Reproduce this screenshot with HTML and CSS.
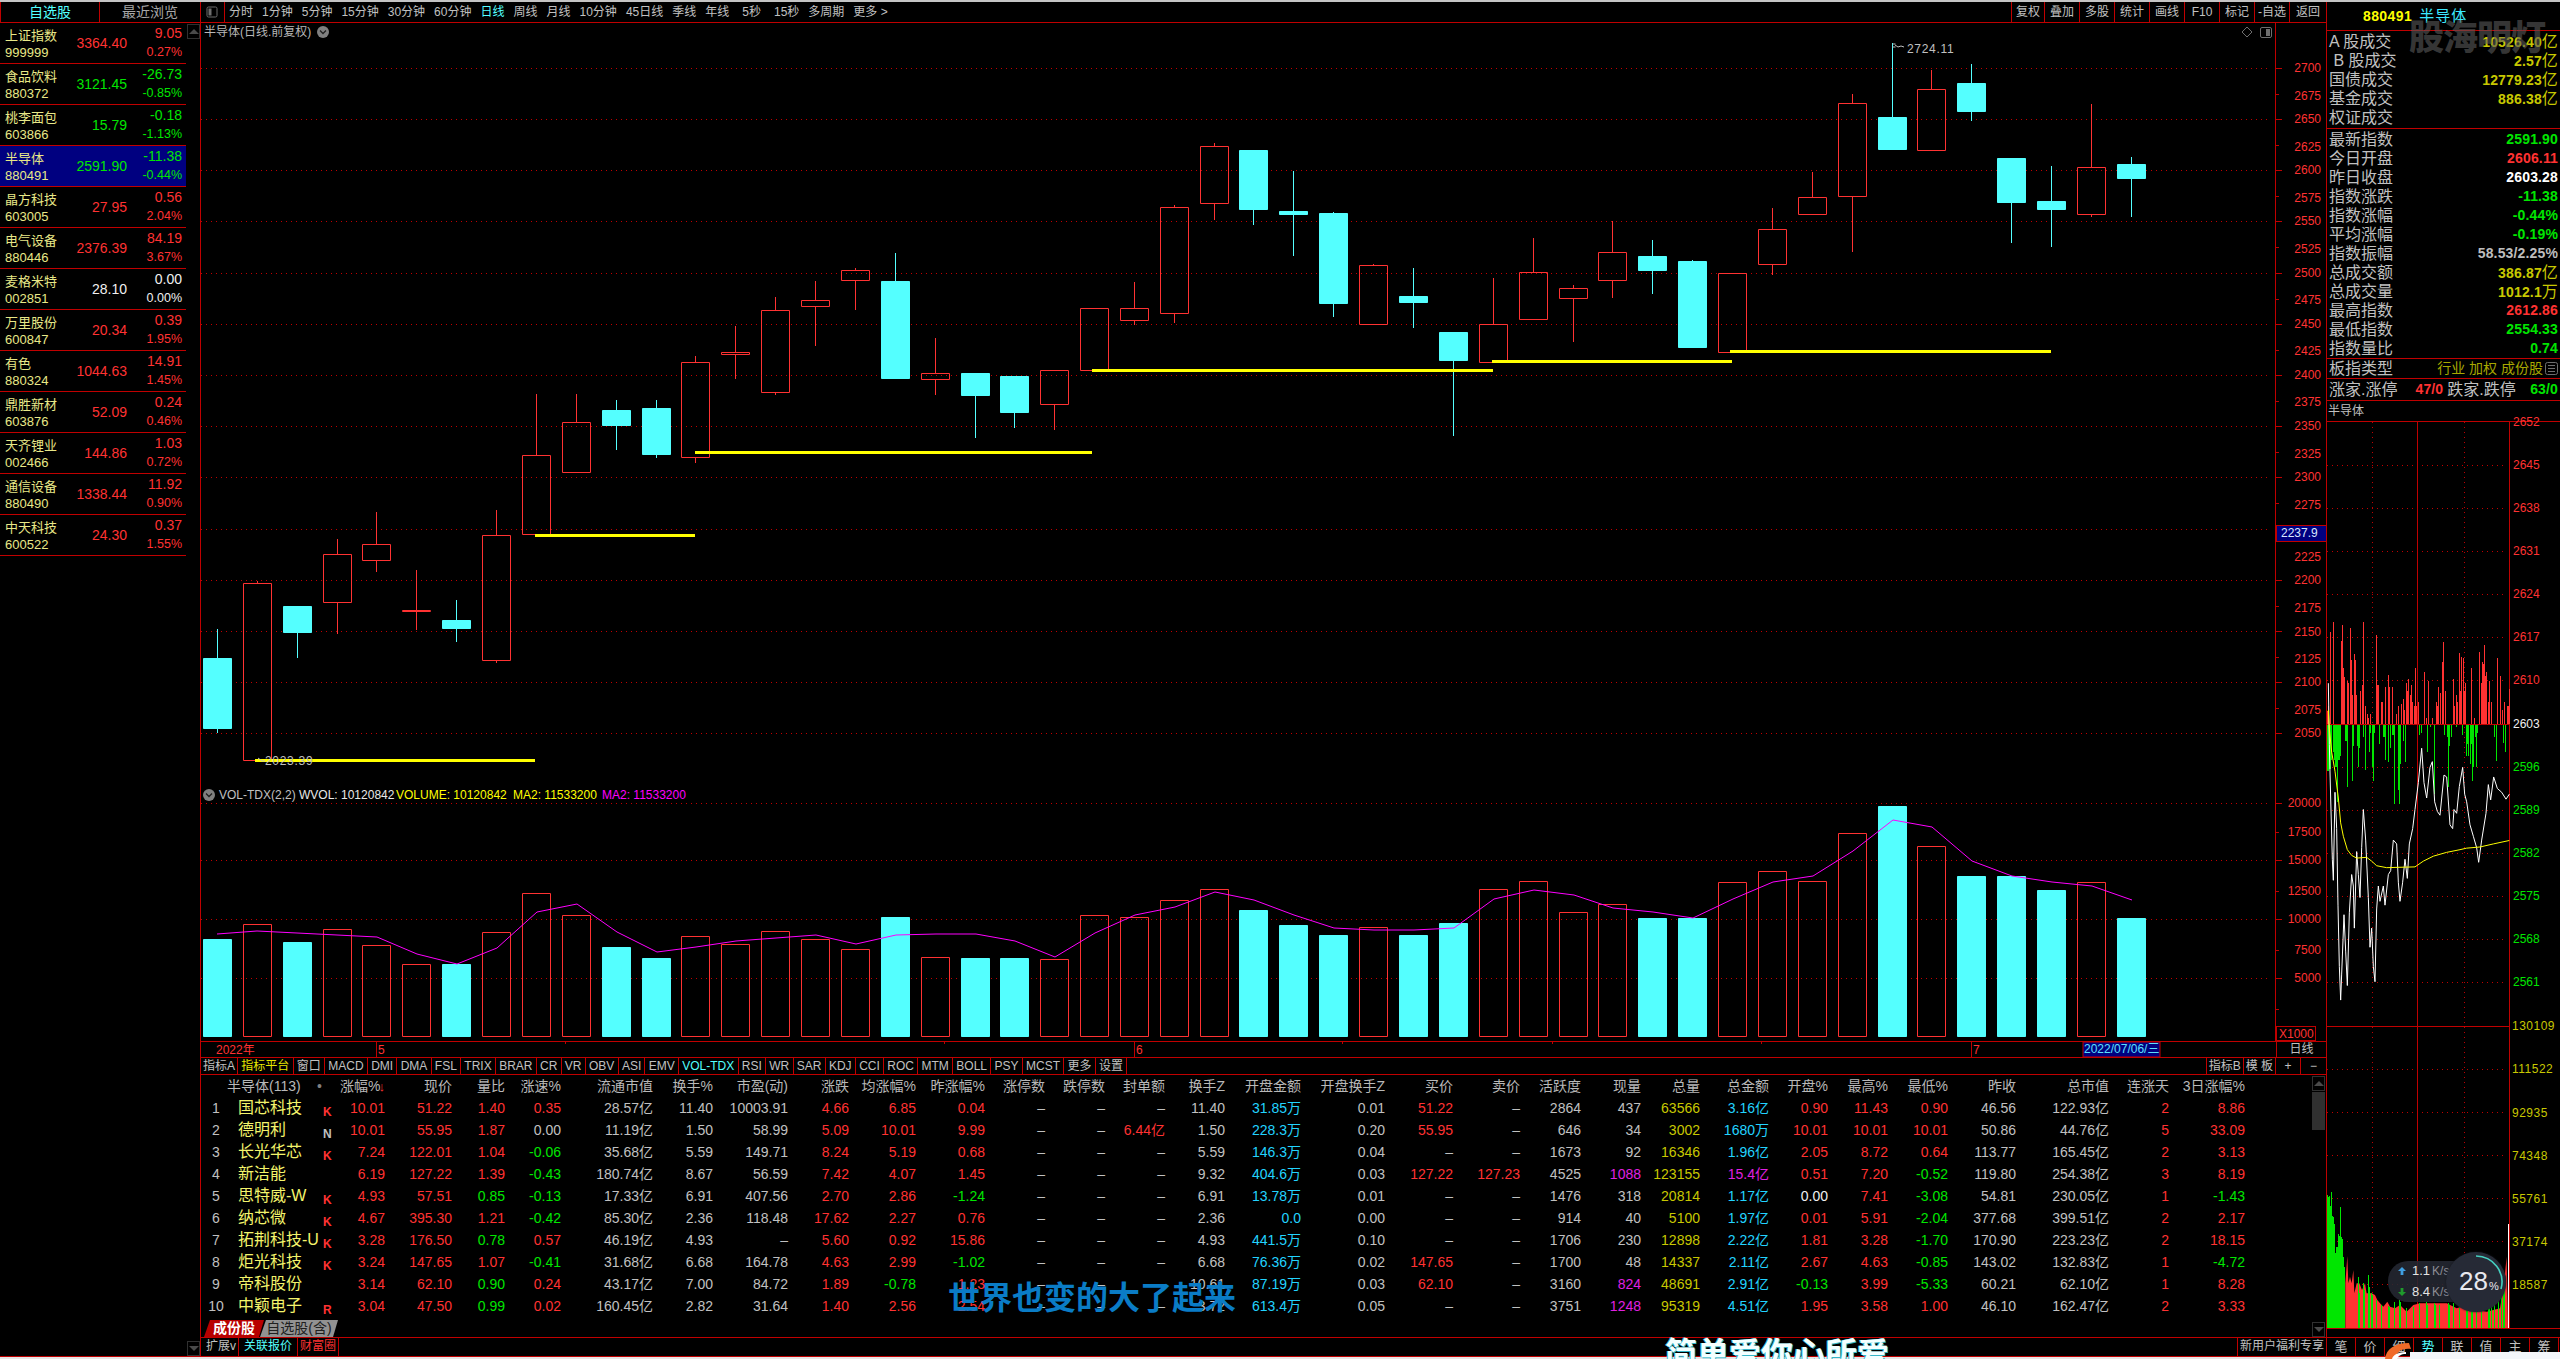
FILE: index.html
```html
<!DOCTYPE html>
<html lang="zh-CN">
<head>
<meta charset="utf-8">
<title>半导体 880491</title>
<link rel="stylesheet" href="styles.css">
</head>
<body>
<div class="topline"></div>
<div class="app">

<aside class="side">
  <div class="side-tabs"><div class="side-tab active">自选股</div><div class="side-tab">最近浏览</div></div>
  <div class="side-body">
    <div class="quotes">
      <div class="quote"><div class="qname"><span>上证指数</span><span>999999</span></div><div class="qprice r">3364.40</div><div class="qchg r"><span>9.05</span><span class="pct">0.27%</span></div></div>
      <div class="quote"><div class="qname"><span>食品饮料</span><span>880372</span></div><div class="qprice g">3121.45</div><div class="qchg g"><span>-26.73</span><span class="pct">-0.85%</span></div></div>
      <div class="quote"><div class="qname"><span>桃李面包</span><span>603866</span></div><div class="qprice g">15.79</div><div class="qchg g"><span>-0.18</span><span class="pct">-1.13%</span></div></div>
      <div class="quote sel"><div class="qname"><span>半导体</span><span>880491</span></div><div class="qprice g">2591.90</div><div class="qchg g"><span>-11.38</span><span class="pct">-0.44%</span></div></div>
      <div class="quote"><div class="qname"><span>晶方科技</span><span>603005</span></div><div class="qprice r">27.95</div><div class="qchg r"><span>0.56</span><span class="pct">2.04%</span></div></div>
      <div class="quote"><div class="qname"><span>电气设备</span><span>880446</span></div><div class="qprice r">2376.39</div><div class="qchg r"><span>84.19</span><span class="pct">3.67%</span></div></div>
      <div class="quote"><div class="qname"><span>麦格米特</span><span>002851</span></div><div class="qprice w">28.10</div><div class="qchg w"><span>0.00</span><span class="pct">0.00%</span></div></div>
      <div class="quote"><div class="qname"><span>万里股份</span><span>600847</span></div><div class="qprice r">20.34</div><div class="qchg r"><span>0.39</span><span class="pct">1.95%</span></div></div>
      <div class="quote"><div class="qname"><span>有色</span><span>880324</span></div><div class="qprice r">1044.63</div><div class="qchg r"><span>14.91</span><span class="pct">1.45%</span></div></div>
      <div class="quote"><div class="qname"><span>鼎胜新材</span><span>603876</span></div><div class="qprice r">52.09</div><div class="qchg r"><span>0.24</span><span class="pct">0.46%</span></div></div>
      <div class="quote"><div class="qname"><span>天齐锂业</span><span>002466</span></div><div class="qprice r">144.86</div><div class="qchg r"><span>1.03</span><span class="pct">0.72%</span></div></div>
      <div class="quote"><div class="qname"><span>通信设备</span><span>880490</span></div><div class="qprice r">1338.44</div><div class="qchg r"><span>11.92</span><span class="pct">0.90%</span></div></div>
      <div class="quote"><div class="qname"><span>中天科技</span><span>600522</span></div><div class="qprice r">24.30</div><div class="qchg r"><span>0.37</span><span class="pct">1.55%</span></div></div>
    </div>
    <div class="side-scroll"><div class="sbtn up"></div><div class="sbtn down"></div></div>
  </div>
</aside>

<main class="center">
  <nav class="toolbar">
    <div class="tool-icon"><svg width="12" height="12" viewBox="0 0 12 12"><rect x="1" y="1" width="10" height="10" rx="1.5" class="ic-line"/><rect x="2.5" y="2.5" width="3" height="7" class="ic-fill"/></svg></div>
    <div class="periods">
      <span>分时</span><span>1分钟</span><span>5分钟</span><span>15分钟</span><span>30分钟</span><span>60分钟</span><span class="on">日线</span><span>周线</span><span>月线</span><span>10分钟</span><span>45日线</span><span>季线</span><span>年线</span><span class="wide">5秒</span><span class="wide">15秒</span><span>多周期</span><span>更多 &gt;</span>
    </div>
    <div class="actions"><span class="first">复权</span><span>叠加</span><span>多股</span><span>统计</span><span>画线</span><span>F10</span><span>标记</span><span>-自选</span><span class="last">返回</span></div>
  </nav>

  <svg class="price-chart" viewBox="201 23 2125 764" width="2125" height="764">
    <path class="grid" d="M201 68.5H2270M201 119.5H2270M201 170.5H2270M201 221.5H2270M201 273.5H2270M201 324.5H2270M201 375.5H2270M201 426.5H2270M201 477.5H2270M201 529.5H2270M201 580.5H2270M201 631.5H2270M201 682.5H2270M201 733.5H2270"/>
    <path class="solid" d="M2275.5 23V787M2276 68.5h6M2276 119.5h6M2276 170.5h6M2276 221.5h6M2276 273.5h6M2276 324.5h6M2276 375.5h6M2276 426.5h6M2276 477.5h6M2276 529.5h6M2276 580.5h6M2276 631.5h6M2276 682.5h6M2276 733.5h6M2276 94.5h3M2276 145.5h3M2276 196.5h3M2276 247.5h3M2276 299.5h3M2276 350.5h3M2276 401.5h3M2276 452.5h3M2276 503.5h3M2276 606.5h3M2276 657.5h3M2276 708.5h3"/>
    <path class="candle-up" d="M243.5 583.5h28V760.5h-28zM257.5 581V583
      M323.5 554.5h28V602.5h-28zM337.5 539V554M337.5 603V634
      M362.5 544.5h28V560.5h-28zM376.5 512V544M376.5 561V572
      M402.5 610.5h28V611.5h-28zM416.5 570V610M416.5 612V630
      M482.5 535.5h28V660.5h-28zM496.5 510V535M496.5 661V663
      M522.5 455.5h28V534.5h-28zM536.5 394V455
      M562.5 422.5h28V472.5h-28zM576.5 394V422
      M681.5 362.5h28V457.5h-28zM695.5 356V362M695.5 458V463
      M721.5 352.5h28V354.5h-28zM735.5 326V352M735.5 355V379
      M761.5 310.5h28V392.5h-28zM775.5 297V310M775.5 393V395
      M801.5 300.5h28V306.5h-28zM815.5 281V300M815.5 307V346
      M841.5 270.5h28V280.5h-28zM855.5 268V270M855.5 281V310
      M921.5 373.5h28V379.5h-28zM935.5 338V373M935.5 380V395
      M1040.5 370.5h28V404.5h-28zM1054.5 405V430
      M1080.5 308.5h28V370.5h-28z
      M1120.5 308.5h28V320.5h-28zM1134.5 282V308M1134.5 321V325
      M1160.5 207.5h28V313.5h-28zM1174.5 205V207M1174.5 314V323
      M1200.5 146.5h28V203.5h-28zM1214.5 143V146M1214.5 204V220
      M1359.5 265.5h28V324.5h-28zM1373.5 264V265
      M1479.5 324.5h28V362.5h-28zM1493.5 278V324
      M1519.5 272.5h28V319.5h-28zM1533.5 238V272
      M1559.5 288.5h28V298.5h-28zM1573.5 285V288M1573.5 299V342
      M1598.5 252.5h28V280.5h-28zM1612.5 221V252M1612.5 281V298
      M1718.5 273.5h28V352.5h-28z
      M1758.5 229.5h28V264.5h-28zM1772.5 208V229M1772.5 265V275
      M1798.5 197.5h28V214.5h-28zM1812.5 172V197
      M1838.5 103.5h28V196.5h-28zM1852.5 94V103M1852.5 197V252
      M1917.5 89.5h28V150.5h-28zM1931.5 70V89
      M2077.5 167.5h28V214.5h-28zM2091.5 104V167M2091.5 215V217"/>
    <path class="candle-down" d="M203.5 658.5h28V728.5h-28zM217.5 629V658M217.5 729V733
      M283.5 606.5h28V632.5h-28zM297.5 633V658
      M442.5 620.5h28V628.5h-28zM456.5 600V620M456.5 629V642
      M602.5 410.5h28V425.5h-28zM616.5 400V410M616.5 426V450
      M642.5 408.5h28V454.5h-28zM656.5 400V408M656.5 455V458
      M881.5 281.5h28V378.5h-28zM895.5 253V281
      M961.5 373.5h28V395.5h-28zM975.5 396V438
      M1000.5 376.5h28V412.5h-28zM1014.5 413V428
      M1239.5 150.5h28V209.5h-28zM1253.5 210V225
      M1279.5 211.5h28V214.5h-28zM1293.5 171V211M1293.5 215V256
      M1319.5 213.5h28V303.5h-28zM1333.5 212V213M1333.5 304V317
      M1399.5 296.5h28V302.5h-28zM1413.5 268V296M1413.5 303V328
      M1439.5 332.5h28V360.5h-28zM1453.5 361V436
      M1638.5 256.5h28V270.5h-28zM1652.5 240V256M1652.5 271V294
      M1678.5 261.5h28V347.5h-28zM1692.5 260V261
      M1878.5 117.5h28V149.5h-28zM1892.5 43V117
      M1957.5 83.5h28V111.5h-28zM1971.5 64V83M1971.5 112V121
      M1997.5 158.5h28V202.5h-28zM2011.5 203V243
      M2037.5 201.5h28V209.5h-28zM2051.5 166V201M2051.5 210V247
      M2117.5 164.5h28V178.5h-28zM2131.5 157V164M2131.5 179V217"/>
    <path class="support" d="M255 760.5H535M535 535.5H695M695 452.5H1092M1092 370.5H1493M1492 361.5H1732M1730 351.5H2051"/>
    <path class="marker" d="M1892.5 44h3M1892.5 47h3M1895 45l3 2 3-1 3 1M258 758l4 3 3 0"/>
    <text class="note" x="1907" y="49">2724.11</text>
    <text class="note" x="265" y="761">2023.39</text>
    <text class="title" x="204" y="32">半导体(日线.前复权)</text>
    <circle class="dot-btn" cx="323" cy="32" r="6"/>
    <path class="dot-chev" d="M320 30.5l3 3 3-3"/>
    <path class="ic-line" d="M2247 27l5 5-5 5-5-5z"/>
    <rect class="ic-line" x="2260.5" y="27.5" width="11" height="10" rx="1.5"/>
    <rect class="ic-fill" x="2266" y="29" width="4" height="7"/>
    <g class="axis-labels">
      <text x="2321" y="68">2700</text><text x="2321" y="96">2675</text><text x="2321" y="119">2650</text><text x="2321" y="147">2625</text><text x="2321" y="170">2600</text><text x="2321" y="198">2575</text><text x="2321" y="221">2550</text><text x="2321" y="249">2525</text><text x="2321" y="273">2500</text><text x="2321" y="300">2475</text><text x="2321" y="324">2450</text><text x="2321" y="351">2425</text><text x="2321" y="375">2400</text><text x="2321" y="402">2375</text><text x="2321" y="426">2350</text><text x="2321" y="454">2325</text><text x="2321" y="477">2300</text><text x="2321" y="505">2275</text><text x="2321" y="557">2225</text><text x="2321" y="580">2200</text><text x="2321" y="608">2175</text><text x="2321" y="632">2150</text><text x="2321" y="659">2125</text><text x="2321" y="682">2100</text><text x="2321" y="710">2075</text><text x="2321" y="733">2050</text>
    </g>
    <rect class="last-box" x="2276.5" y="525.5" width="50" height="16"/>
    <text class="last-text" x="2281" y="533">2237.9</text>
  </svg>

  <svg class="vol-chart" viewBox="201 788 2125 254" width="2125" height="254">
    <path class="grid" d="M201 804.5H2270M201 861.5H2270M201 920.5H2270M201 979.5H2270"/>
    <path class="solid" d="M2275.5 788V1042M2276 804.5h6M2276 861.5h6M2276 920.5h6M2276 979.5h6M2276 833.5h3M2276 892.5h3M2276 951.5h3M2276 1010.5h3"/>
    <path class="candle-up" d="M243.5 925.5h28V1037.5h-28zM323.5 930.5h28V1037.5h-28zM362.5 946.5h28V1037.5h-28zM402.5 965.5h28V1037.5h-28zM482.5 933.5h28V1037.5h-28zM522.5 894.5h28V1037.5h-28zM562.5 916.5h28V1037.5h-28zM681.5 937.5h28V1037.5h-28zM721.5 945.5h28V1037.5h-28zM761.5 932.5h28V1037.5h-28zM801.5 940.5h28V1037.5h-28zM841.5 950.5h28V1037.5h-28zM921.5 958.5h28V1037.5h-28zM1040.5 960.5h28V1037.5h-28zM1080.5 916.5h28V1037.5h-28zM1120.5 918.5h28V1037.5h-28zM1160.5 901.5h28V1037.5h-28zM1200.5 890.5h28V1037.5h-28zM1359.5 928.5h28V1037.5h-28zM1479.5 890.5h28V1037.5h-28zM1519.5 882.5h28V1037.5h-28zM1559.5 913.5h28V1037.5h-28zM1598.5 905.5h28V1037.5h-28zM1718.5 883.5h28V1037.5h-28zM1758.5 872.5h28V1037.5h-28zM1798.5 882.5h28V1037.5h-28zM1838.5 834.5h28V1037.5h-28zM1917.5 847.5h28V1037.5h-28zM2077.5 883.5h28V1037.5h-28z"/>
    <path class="candle-down" d="M203.5 940.5h28V1037.5h-28zM283.5 943.5h28V1037.5h-28zM442.5 965.5h28V1037.5h-28zM602.5 948.5h28V1037.5h-28zM642.5 959.5h28V1037.5h-28zM881.5 918.5h28V1037.5h-28zM961.5 959.5h28V1037.5h-28zM1000.5 959.5h28V1037.5h-28zM1239.5 911.5h28V1037.5h-28zM1279.5 926.5h28V1037.5h-28zM1319.5 936.5h28V1037.5h-28zM1399.5 936.5h28V1037.5h-28zM1439.5 924.5h28V1037.5h-28zM1638.5 919.5h28V1037.5h-28zM1678.5 919.5h28V1037.5h-28zM1878.5 807.5h28V1037.5h-28zM1957.5 877.5h28V1037.5h-28zM1997.5 877.5h28V1037.5h-28zM2037.5 891.5h28V1037.5h-28zM2117.5 919.5h28V1037.5h-28z"/>
    <polyline class="ma" points="217,935 257,932 297,934 337,936 377,938 417,955 457,965 497,949 537,913 577,905 617,933 657,953 696,948 736,942 776,939 816,936 856,945 896,936 936,935 976,935 1015,942 1055,958 1095,934 1135,916 1175,908 1215,893 1254,901 1294,916 1334,929 1374,931 1414,931 1454,929 1494,900 1534,891 1574,896 1613,909 1653,913 1693,919 1733,900 1773,883 1813,877 1853,852 1893,821 1932,828 1972,862 2012,877 2052,883 2092,887 2132,901"/>
    <circle class="dot-btn" cx="209" cy="796" r="6"/>
    <path class="dot-chev" d="M206 794.5l3 3 3-3"/>
    <text class="ind gray" x="219" y="796">VOL-TDX(2,2)</text>
    <text class="ind white" x="299" y="796">WVOL: 10120842</text>
    <text class="ind yellow" x="396" y="796">VOLUME: 10120842</text>
    <text class="ind yellow" x="513" y="796">MA2: 11533200</text>
    <text class="ind magenta" x="602" y="796">MA2: 11533200</text>
    <g class="axis-labels">
      <text x="2321" y="804">20000</text><text x="2321" y="833">17500</text><text x="2321" y="861">15000</text><text x="2321" y="892">12500</text><text x="2321" y="920">10000</text><text x="2321" y="951">7500</text><text x="2321" y="979">5000</text>
    </g>
    <rect class="x-box" x="2276.5" y="1027.5" width="39" height="14"/>
    <text class="x-text" x="2279" y="1035">X1000</text>
  </svg>

  <div class="datebar">
    <svg class="dates" viewBox="201 1043 2075 15" width="2075" height="15">
      <path class="solid" d="M376.5 1043V1058M1134.5 1043V1058M1971.5 1043V1058M565.5 1043v2M944.5 1043v2M1342.5 1043v2M1552.5 1043v2M1761.5 1043v2"/>
      <text class="date-r" x="216" y="1051">2022年</text>
      <text class="date-r" x="378" y="1051">5</text>
      <text class="date-r" x="1136" y="1051">6</text>
      <text class="date-r" x="1973" y="1051">7</text>
      <rect class="cursor-box" x="2083" y="1043" width="77" height="15"/>
      <text class="cursor-date" x="2084" y="1050">2022/07/06/三</text>
    </svg>
    <div class="date-cell">日线</div>
  </div>

  <div class="indtabs">
    <span class="tight">指标A</span><span class="yel">指标平台</span><span>窗口</span><span>MACD</span><span>DMI</span><span>DMA</span><span>FSL</span><span>TRIX</span><span>BRAR</span><span>CR</span><span>VR</span><span>OBV</span><span>ASI</span><span>EMV</span><span class="on">VOL-TDX</span><span>RSI</span><span>WR</span><span>SAR</span><span>KDJ</span><span>CCI</span><span>ROC</span><span>MTM</span><span>BOLL</span><span>PSY</span><span>MCST</span><span>更多</span><span>设置</span>
    <div class="indright"><span class="tight">指标B</span><span class="tight">模 板</span><span class="pm">+</span><span class="pm">−</span></div>
  </div>

  <section class="table-wrap">
    <div class="tbl">
      <div class="row head"><span></span><span class="hname">半导体(113)</span><span class="hdot">•</span><span>涨幅%<b class="arrow">↓</b></span><span>现价</span><span>量比</span><span>涨速%</span><span>流通市值</span><span>换手%</span><span>市盈(动)</span><span>涨跌</span><span>均涨幅%</span><span>昨涨幅%</span><span>涨停数</span><span>跌停数</span><span>封单额</span><span>换手Z</span><span>开盘金额</span><span>开盘换手Z</span><span>买价</span><span>卖价</span><span>活跃度</span><span>现量</span><span>总量</span><span>总金额</span><span>开盘%</span><span>最高%</span><span>最低%</span><span>昨收</span><span>总市值</span><span>连涨天</span><span>3日涨幅%</span></div>

      <div class="row"><span class="no">1</span><span class="nm">国芯科技</span><span class="tag r">K</span><span class="r">10.01</span><span class="r">51.22</span><span class="r">1.40</span><span class="r">0.35</span><span>28.57亿</span><span>11.40</span><span>10003.91</span><span class="r">4.66</span><span class="r">6.85</span><span class="r">0.04</span><span>–</span><span>–</span><span>–</span><span>11.40</span><span class="c">31.85万</span><span>0.01</span><span class="r">51.22</span><span>–</span><span>2864</span><span>437</span><span class="y">63566</span><span class="c">3.16亿</span><span class="r">0.90</span><span class="r">11.43</span><span class="r">0.90</span><span>46.56</span><span>122.93亿</span><span class="r">2</span><span class="r">8.86</span></div>
      <div class="row"><span class="no">2</span><span class="nm">德明利</span><span class="tag">N</span><span class="r">10.01</span><span class="r">55.95</span><span class="r">1.87</span><span>0.00</span><span>11.19亿</span><span>1.50</span><span>58.99</span><span class="r">5.09</span><span class="r">10.01</span><span class="r">9.99</span><span>–</span><span>–</span><span class="r">6.44亿</span><span>1.50</span><span class="c">228.3万</span><span>0.20</span><span class="r">55.95</span><span>–</span><span>646</span><span>34</span><span class="y">3002</span><span class="c">1680万</span><span class="r">10.01</span><span class="r">10.01</span><span class="r">10.01</span><span>50.86</span><span>44.76亿</span><span class="r">5</span><span class="r">33.09</span></div>
      <div class="row"><span class="no">3</span><span class="nm">长光华芯</span><span class="tag r">K</span><span class="r">7.24</span><span class="r">122.01</span><span class="r">1.04</span><span class="g">-0.06</span><span>35.68亿</span><span>5.59</span><span>149.71</span><span class="r">8.24</span><span class="r">5.19</span><span class="r">0.68</span><span>–</span><span>–</span><span>–</span><span>5.59</span><span class="c">146.3万</span><span>0.04</span><span>–</span><span>–</span><span>1673</span><span>92</span><span class="y">16346</span><span class="c">1.96亿</span><span class="r">2.05</span><span class="r">8.72</span><span class="r">0.64</span><span>113.77</span><span>165.45亿</span><span class="r">2</span><span class="r">3.13</span></div>
      <div class="row"><span class="no">4</span><span class="nm">新洁能</span><span class="tag"></span><span class="r">6.19</span><span class="r">127.22</span><span class="r">1.39</span><span class="g">-0.43</span><span>180.74亿</span><span>8.67</span><span>56.59</span><span class="r">7.42</span><span class="r">4.07</span><span class="r">1.45</span><span>–</span><span>–</span><span>–</span><span>9.32</span><span class="c">404.6万</span><span>0.03</span><span class="r">127.22</span><span class="r">127.23</span><span>4525</span><span class="m">1088</span><span class="y">123155</span><span class="m">15.4亿</span><span class="r">0.51</span><span class="r">7.20</span><span class="g">-0.52</span><span>119.80</span><span>254.38亿</span><span class="r">3</span><span class="r">8.19</span></div>
      <div class="row"><span class="no">5</span><span class="nm">思特威-W</span><span class="tag r">K</span><span class="r">4.93</span><span class="r">57.51</span><span class="g">0.85</span><span class="g">-0.13</span><span>17.33亿</span><span>6.91</span><span>407.56</span><span class="r">2.70</span><span class="r">2.86</span><span class="g">-1.24</span><span>–</span><span>–</span><span>–</span><span>6.91</span><span class="c">13.78万</span><span>0.01</span><span>–</span><span>–</span><span>1476</span><span>318</span><span class="y">20814</span><span class="c">1.17亿</span><span class="w">0.00</span><span class="r">7.41</span><span class="g">-3.08</span><span>54.81</span><span>230.05亿</span><span class="r">1</span><span class="g">-1.43</span></div>
      <div class="row"><span class="no">6</span><span class="nm">纳芯微</span><span class="tag r">K</span><span class="r">4.67</span><span class="r">395.30</span><span class="r">1.21</span><span class="g">-0.42</span><span>85.30亿</span><span>2.36</span><span>118.48</span><span class="r">17.62</span><span class="r">2.27</span><span class="r">0.76</span><span>–</span><span>–</span><span>–</span><span>2.36</span><span class="c">0.0</span><span>0.00</span><span>–</span><span>–</span><span>914</span><span>40</span><span class="y">5100</span><span class="c">1.97亿</span><span class="r">0.01</span><span class="r">5.91</span><span class="g">-2.04</span><span>377.68</span><span>399.51亿</span><span class="r">2</span><span class="r">2.17</span></div>
      <div class="row"><span class="no">7</span><span class="nm">拓荆科技-U</span><span class="tag r">K</span><span class="r">3.28</span><span class="r">176.50</span><span class="g">0.78</span><span class="r">0.57</span><span>46.19亿</span><span>4.93</span><span>–</span><span class="r">5.60</span><span class="r">0.92</span><span class="r">15.86</span><span>–</span><span>–</span><span>–</span><span>4.93</span><span class="c">441.5万</span><span>0.10</span><span>–</span><span>–</span><span>1706</span><span>230</span><span class="y">12898</span><span class="c">2.22亿</span><span class="r">1.81</span><span class="r">3.28</span><span class="g">-1.70</span><span>170.90</span><span>223.23亿</span><span class="r">2</span><span class="r">18.15</span></div>
      <div class="row"><span class="no">8</span><span class="nm">炬光科技</span><span class="tag r">K</span><span class="r">3.24</span><span class="r">147.65</span><span class="r">1.07</span><span class="g">-0.41</span><span>31.68亿</span><span>6.68</span><span>164.78</span><span class="r">4.63</span><span class="r">2.99</span><span class="g">-1.02</span><span>–</span><span>–</span><span>–</span><span>6.68</span><span class="c">76.36万</span><span>0.02</span><span class="r">147.65</span><span>–</span><span>1700</span><span>48</span><span class="y">14337</span><span class="c">2.11亿</span><span class="r">2.67</span><span class="r">4.63</span><span class="g">-0.85</span><span>143.02</span><span>132.83亿</span><span class="r">1</span><span class="g">-4.72</span></div>
      <div class="row"><span class="no">9</span><span class="nm">帝科股份</span><span class="tag"></span><span class="r">3.14</span><span class="r">62.10</span><span class="g">0.90</span><span class="r">0.24</span><span>43.17亿</span><span>7.00</span><span>84.72</span><span class="r">1.89</span><span class="g">-0.78</span><span class="r">1.23</span><span>–</span><span>–</span><span>–</span><span>10.61</span><span class="c">87.19万</span><span>0.03</span><span class="r">62.10</span><span>–</span><span>3160</span><span class="m">824</span><span class="y">48691</span><span class="c">2.91亿</span><span class="g">-0.13</span><span class="r">3.99</span><span class="g">-5.33</span><span>60.21</span><span>62.10亿</span><span class="r">1</span><span class="r">8.28</span></div>
      <div class="row"><span class="no">10</span><span class="nm">中颖电子</span><span class="tag r">R</span><span class="r">3.04</span><span class="r">47.50</span><span class="g">0.99</span><span class="r">0.02</span><span>160.45亿</span><span>2.82</span><span>31.64</span><span class="r">1.40</span><span class="r">2.56</span><span class="r">2.54</span><span>–</span><span>–</span><span>–</span><span>3.72</span><span class="c">613.4万</span><span>0.05</span><span>–</span><span>–</span><span>3751</span><span class="m">1248</span><span class="y">95319</span><span class="c">4.51亿</span><span class="r">1.95</span><span class="r">3.58</span><span class="r">1.00</span><span>46.10</span><span>162.47亿</span><span class="r">2</span><span class="r">3.33</span></div>

      <div class="subtabs"><span class="st on">成份股</span><span class="st">自选股(含)</span></div>
    </div>
    <div class="vscroll"><div class="sbtn up"></div><div class="thumb"></div><div class="sbtn down"></div></div>
  </section>

  <footer class="bottombar">
    <span>扩展v</span><span class="cy">关联报价</span><span class="rd">财富圈</span>
    <span class="promo">新用户福利专享</span>
  </footer>
</main>

<aside class="panel">
  <div class="p-head"><span class="p-code">880491</span><span class="p-name">半导体</span></div>
  <div class="p-block top">
    <div class="prow"><span>A 股成交</span><b class="y">10526.40<i>亿</i></b></div>
    <div class="prow"><span>&nbsp;B 股成交</span><b class="y">2.57<i>亿</i></b></div>
    <div class="prow"><span>国债成交</span><b class="y">12779.23<i>亿</i></b></div>
    <div class="prow"><span>基金成交</span><b class="y">886.38<i>亿</i></b></div>
    <div class="prow"><span>权证成交</span></div>
  </div>
  <div class="p-block mid">
    <div class="prow"><span>最新指数</span><b class="g">2591.90</b></div>
    <div class="prow"><span>今日开盘</span><b class="r">2606.11</b></div>
    <div class="prow"><span>昨日收盘</span><b class="w">2603.28</b></div>
    <div class="prow"><span>指数涨跌</span><b class="g">-11.38</b></div>
    <div class="prow"><span>指数涨幅</span><b class="g">-0.44%</b></div>
    <div class="prow"><span>平均涨幅</span><b class="g">-0.19%</b></div>
    <div class="prow"><span>指数振幅</span><b>58.53/2.25%</b></div>
    <div class="prow"><span>总成交额</span><b class="y">386.87<i>亿</i></b></div>
    <div class="prow"><span>总成交量</span><b class="y">1012.1<i>万</i></b></div>
    <div class="prow"><span>最高指数</span><b class="r">2612.86</b></div>
    <div class="prow"><span>最低指数</span><b class="g">2554.33</b></div>
    <div class="prow"><span>指数量比</span><b class="g">0.74</b></div>
  </div>
  <div class="p-block type">
    <div class="prow"><span>板指类型</span><em class="olive">行业 加权 成份股<svg width="13" height="13" viewBox="0 0 13 13"><rect x=".5" y=".5" width="12" height="12" rx="2" class="ic-line"/><path class="ic-line" d="M3 3.5h7M3 6.5h7M3 9.5h7"/></svg></em></div>
  </div>
  <div class="p-block breadth">
    <div class="prow"><span>涨家.涨停</span><b class="r b1">47/0</b><span class="s2">跌家.跌停</span><b class="g b3">63/0</b></div>
  </div>
  <div class="p-label">半导体</div>

  <svg class="intraday" viewBox="2327 422 233 906" width="233" height="906">
    <path class="grid" d="M2327 465.5H2505M2327 508.5H2505M2327 551.5H2505M2327 594.5H2505M2327 637.5H2505M2327 680.5H2505M2327 767.5H2505M2327 810.5H2505M2327 853.5H2505M2327 896.5H2505M2327 939.5H2505M2327 982.5H2505M2327 1069.5H2505M2327 1112.5H2505M2327 1155.5H2505M2327 1198.5H2505M2327 1241.5H2505M2327 1284.5H2505M2372.5 422V1328M2464.5 422V1328"/>
    <path class="solid" d="M2417.5 422V1328M2509.5 422V1328M2327 724.5H2509M2327 1026.5H2509"/>

    <g transform="translate(2300 400) scale(.33333 .38270)">
      <path class="bar-r" d="M82 846V812M85 846V800M93 846V605M101 846V580M125 846V630M127 846V588M131 846V700M134 846V725M142 846V735M145 846V745M147 846V740M151 846V595M153 846V740M155 846V680M158 846V770M163 846V665M167 846V680M170 846V770M183 846V760M187 846V745M190 846V580M196 846V800M202 846V820M206 846V830M213 846V820M229 846V615M232 846V745M235 846V745M245 846V790M249 846V790M256 846V750M265 846V718M270 846V750M279 846V750M291 846V820M295 846V800M305 846V795M311 846V780M315 846V810M320 846V740M324 846V760M327 846V730M331 846V770M334 846V745M338 846V790M343 846V800M347 846V700M351 846V800M355 846V790M373 846V712M379 846V830M386 846V735M398 846V830M409 846V790M413 846V800M416 846V750M423 846V765M427 846V685M431 846V632M437 846V760M461 846V730M465 846V800M469 846V770M473 846V790M478 846V660M482 846V760M486 846V672M490 846V675M494 846V760M498 846V740M515 846V700M524 846V830M538 846V658M544 846V740M547 846V685M550 846V690M553 846V710M555 846V640M558 846V720M561 846V710M566 846V790M569 846V735M575 846V790M594 846V675M601 846V720M607 846V810M613 846V790M623 846V800M626 846V800M629 846V755"/>
      <path class="bar-g" d="M83 848V970M86 848V970M89 848V965M92 848V965M96 848V940M100 848V920M104 848V940M108 848V960M110 848V960M112 848V1050M116 848V940M119 848V940M121 848V930M136 848V890M139 848V890M142 848V1012M158 848V995M160 848V905M172 848V905M176 848V960M180 848V910M192 848V880M198 848V968M210 848V920M213 848V870M219 848V960M222 848V995M225 848V870M236 848V850M240 848V900M250 848V880M254 848V880M258 848V940M266 848V945M272 848V910M278 848V875M281 848V875M284 848V1055M295 848V1020M297 848V1020M299 848V1055M302 848V950M310 848V890M316 848V945M322 848V850M360 848V875M366 848V870M382 848V920M392 848V855M405 848V1030M433 848V875M442 848V880M445 848V900M447 848V1010M450 848V905M454 848V880M469 848V855M488 848V875M500 848V930M503 848V900M506 848V930M511 848V950M515 848V900M518 848V995M522 848V960M526 848V880M530 848V960M534 848V870M584 848V880M591 848V942M610 848V895M618 848V920"/>
      <polyline class="line-w" points="85,740 88,900 92,1040 97,1200 100,1255 105,1025 110,1120 114,1320 118,1480 122,1568 125,1500 132,1345 137,1440 142,1530 148,1340 155,1240 160,1270 163,1380 170,1180 175,1240 180,1300 185,1170 190,1070 197,1150 205,1300 210,1430 215,1380 220,1480 225,1520 230,1330 235,1270 240,1310 250,1270 255,1320 265,1240 272,1230 280,1150 290,1160 295,1260 300,1310 308,1260 315,1200 322,1250 328,1160 338,1120 345,1070 355,1000 365,910 372,1000 380,1040 390,960 397,945 404,1050 412,1075 420,1085 432,980 440,985 450,1110 458,1120 462,1070 470,1080 478,1010 488,960 494,1030 500,1050 510,1110 520,1140 530,1170 536,1208 545,1150 558,1080 565,1005 572,1045 581,985 592,1015 605,1025 618,1043 628,1030"/>
      <polyline class="line-y" points="85,810 88,860 95,920 105,970 115,1040 122,1105 130,1140 142,1175 155,1190 170,1197 200,1195 215,1205 230,1217 260,1222 300,1221 345,1220 370,1205 400,1192 440,1182 480,1175 500,1171 540,1168 580,1160 628,1151"/>
    </g>

    <g transform="translate(2300 1000) scale(.33333)">
      <path class="fill-r" d="M136 985L136 850 142 768 145 850 150 830 155 850 160 810 163 880 170 850 178 850 186 870 195 850 200 880 215 880 225 885 232 900 240 910 250 920 262 905 270 920 285 925 300 915 320 935 340 915 360 910 400 910 440 910 470 925 500 915 530 930 560 935 600 925 612 850 620 770 624 985Z"/>
      <path class="bar-g" d="M82 985V585M85 985V590M88 985V588M91 985V618M94 985V575M97 985V648M100 985V650M103 985V672M106 985V760M109 985V742M112 985V742M115 985V702M118 985V708M121 985V622M124 985V712M127 985V716M130 985V770M133 985V800M175 985V832M178 985V880M190 985V850M193 985V870M205 985V825M208 985V860M215 985V880M218 985V885M230 985V900M245 985V915M265 985V918M268 985V920M285 985V905M300 985V900M303 985V905M320 985V925M340 985V920M360 985V910M380 985V905M383 985V915M405 985V910M408 985V915M420 985V915M445 985V910M448 985V915M460 985V910M480 985V925M500 985V890M503 985V905M515 985V905M518 985V900M530 985V900M545 985V900M565 985V880M568 985V890M575 985V920M585 985V910M595 985V890M605 985V870M610 985V860M615 985V840"/>
    </g>
    <path class="bar-white" d="M2508.5 1224V1328"/>

    <g class="day-labels">
      <text class="dr" x="2513" y="422">2652</text><text class="dr" x="2513" y="465">2645</text><text class="dr" x="2513" y="508">2638</text><text class="dr" x="2513" y="551">2631</text><text class="dr" x="2513" y="594">2624</text><text class="dr" x="2513" y="637">2617</text><text class="dr" x="2513" y="680">2610</text><text class="dw" x="2513" y="724">2603</text><text class="dg" x="2513" y="767">2596</text><text class="dg" x="2513" y="810">2589</text><text class="dg" x="2513" y="853">2582</text><text class="dg" x="2513" y="896">2575</text><text class="dg" x="2513" y="939">2568</text><text class="dg" x="2513" y="982">2561</text>
      <text class="dy" x="2512" y="1026">130109</text><text class="dy" x="2512" y="1069">111522</text><text class="dy" x="2512" y="1113">92935</text><text class="dy" x="2512" y="1156">74348</text><text class="dy" x="2512" y="1199">55761</text><text class="dy" x="2512" y="1242">37174</text><text class="dy" x="2512" y="1285">18587</text>
    </g>
  </svg>

  <div class="p-gap"></div>
  <div class="p-tabs"><span>笔</span><span>价</span><span>细</span><span class="on">势</span><span>联</span><span>值</span><span>主</span><span>筹</span></div>
</aside>
</div>
<div class="bottomline"></div>

<div class="watermark">股海明灯</div>
<div class="sub-blue">世界也变的大了起来</div>
<div class="sub-white">简单爱你心所爱</div>

<div class="netmeter">
  <div class="netrow"><svg width="10" height="10" viewBox="0 0 10 10"><path class="arr-up" d="M5 1l4 4H6.4v4H3.6V5H1z"/></svg><b>1.1</b><i>K/s</i></div>
  <div class="netrow"><svg width="10" height="10" viewBox="0 0 10 10"><path class="arr-dn" d="M5 9L1 5h2.6V1h2.8v4H9z"/></svg><b>8.4</b><i>K/s</i></div>
  <div class="gauge">
    <svg width="60" height="60" viewBox="0 0 60 60"><path class="gauge-arc" d="M30 4A26 26 0 0 1 55 37"/></svg>
    <span class="gauge-num">28<small>%</small></span>
  </div>
</div>

<div class="popup">
  <svg class="popup-logo" width="30" height="16" viewBox="0 0 30 16"><path class="logo-o" d="M2 16C3 6 12 0 26 0l2 6C18 5 14 9 12 16z"/><path class="logo-w" d="M9 16c1-4 6-7 14-7v2c-5 0-8 2-9 5z"/></svg>
  <div class="popup-strip"></div>
</div>
</body>
</html>
```
FILE: styles.css
```css
* { box-sizing: border-box; }
html, body { margin: 0; padding: 0; }
body {
  width: 2560px; height: 1359px; overflow: hidden; position: relative;
  background: #000; color: #c0c0c0;
  font: 12px/1.2 "Liberation Sans", "Noto Sans CJK SC", sans-serif;
  display: flex; flex-direction: column;
}
.r { color: #ff3232; }
.g { color: #00e600; }
.w { color: #f0f0f0; }
.c { color: #22d3ff; }
.y { color: #c8c800; }
.m { color: #e020e0; }

.topline { height: 2px; background: #c4c4c4; flex: none; }
.bottomline { height: 2px; background: #e6e6e6; flex: none; }
.app { display: flex; height: 1355px; flex: none; border-bottom: 1px solid #c00000; }

/* left quote list */
.side { width: 200px; flex: none; display: flex; flex-direction: column; }
.side-tabs { display: flex; height: 21px; border-bottom: 1px solid #c00000; flex: none; }
.side-tab { width: 100px; text-align: center; font-size: 14px; line-height: 20px; color: #a8a8a8; }
.side-tab.active { width: 100px; color: #54ffff; border-left: 1px solid #c00000; border-right: 1px solid #c00000; }
.side-body { display: flex; flex: 1; }
.quotes { width: 186px; flex: none; }
.quote { height: 41px; border-bottom: 1px solid #c00000; display: grid; grid-template-columns: 1fr auto 55px; padding: 0 4px 0 5px; align-items: center; }
.quote.sel { background: #000080; }
.qname { display: flex; flex-direction: column; color: #e8e888; font-size: 13px; line-height: 17px; padding-top: 2px; }
.qprice { font-size: 14px; line-height: 40px; }
.qchg { display: flex; flex-direction: column; align-items: flex-end; font-size: 14px; line-height: 19px; }
.pct { font-size: 12.5px; }
.side-scroll { flex: 1; display: flex; flex-direction: column; justify-content: space-between; padding: 1px 0 0 1px; }
.sbtn { width: 13px; height: 15px; border: 1px solid #303030; display: flex; align-items: center; justify-content: center; flex: none; }
.sbtn::after { content: ""; border-left: 5px solid transparent; border-right: 5px solid transparent; }
.sbtn.up::after { border-bottom: 5px solid #4a4a4a; }
.sbtn.down::after { border-top: 5px solid #4a4a4a; }

/* center */
.center { flex: 1; min-width: 0; display: flex; flex-direction: column; border-left: 1px solid #c00000; }
.toolbar { height: 21px; flex: none; display: flex; align-items: stretch; border-bottom: 1px solid #c00000; line-height: 20px; }
.tool-icon { width: 24px; border-right: 1px solid #c00000; display: flex; align-items: center; padding-left: 5px; }
.periods { display: flex; gap: 9px; padding-left: 4px; }
.periods .on { color: #54ffff; }
.periods .wide { margin-left: 4px; }
.actions { margin-left: auto; display: flex; }
.actions span { width: 35px; text-align: center; border-left: 1px solid #c00000; }
.actions .first { width: 33px; }
.actions .last { width: 37px; }

svg { display: block; }
.price-chart, .vol-chart, .intraday { flex: none; overflow: visible; }
.vol-chart { border-top: 0; }
.grid { fill: none; stroke: #c00000; stroke-width: 1; stroke-dasharray: 1 4; }
.solid { fill: none; stroke: #c00000; stroke-width: 1; }
.candle-up { fill: none; stroke: #ff3232; stroke-width: 1; }
.candle-down { fill: #54ffff; stroke: #54ffff; stroke-width: 1; }
.support { fill: none; stroke: #ffff00; stroke-width: 3; }
.marker { fill: none; stroke: #c0c0c0; stroke-width: 1; }
.note { fill: #c0c0c0; font-size: 12px; letter-spacing: .7px; dominant-baseline: central; }
.title { fill: #b8b8b8; font-size: 12px; dominant-baseline: central; }
.dot-btn { fill: #808080; }
.dot-chev { fill: none; stroke: #202020; stroke-width: 1.3; }
.ic-line { fill: none; stroke: #6e6e6e; stroke-width: 1; }
.ic-fill { fill: #6e6e6e; }
.axis-labels text { fill: #ff3232; font-size: 12px; text-anchor: end; dominant-baseline: central; }
.last-box { fill: #000080; stroke: #c00000; }
.last-text { fill: #d8e8ff; font-size: 12px; dominant-baseline: central; }
.ma { fill: none; stroke: #ff00ff; stroke-width: 1; }
.ind { font-size: 12px; dominant-baseline: central; }
.ind.gray { fill: #c0c0c0; }
.ind.white { fill: #e8e8e8; }
.ind.yellow { fill: #ffff00; }
.ind.magenta { fill: #ff00ff; }
.x-box { fill: #000; stroke: #c00000; }
.x-text { fill: #ff3232; font-size: 12px; dominant-baseline: central; }

.datebar { flex: none; display: flex; border-top: 1px solid #c00000; border-bottom: 1px solid #c00000; height: 17px; }
.dates { flex: none; }
.date-r { fill: #ff3232; font-size: 12px; dominant-baseline: central; }
.cursor-box { fill: #000080; stroke: #c00000; }
.cursor-date { fill: #5ce0ff; font-size: 12px; dominant-baseline: central; }
.date-cell { width: 50px; text-align: center; line-height: 15px; border-left: 1px solid #c00000; }

.indtabs { height: 17px; flex: none; display: flex; border-bottom: 1px solid #c00000; line-height: 16px; }
.indtabs span { padding: 0 3.25px; border-right: 1px solid #c00000; white-space: nowrap; }
.indtabs .tight { padding: 0 2px; }
.indtabs .yel { color: #e8e800; }
.indtabs .on { color: #54ffff; }
.indright { margin-left: auto; display: flex; }
.indright span { border-right: 1px solid #c00000; border-left: 0; }
.indright span:first-child { border-left: 1px solid #c00000; }
.indright .pm { width: 25px; padding: 0; text-align: center; }
.indright .pm:last-child { border-right: 0; }

.table-wrap { flex: 1; min-height: 0; display: flex; border-bottom: 1px solid #c00000; }
.tbl { flex: 1; min-width: 0; display: flex; flex-direction: column; }
.row {
  display: grid; height: 22px; flex: none; line-height: 22px; font-size: 14px; text-align: right; white-space: nowrap;
  grid-template-columns: 23px 98px 15px 48px 67px 53px 56px 92px 60px 75px 61px 67px 69px 60px 60px 60px 60px 76px 84px 68px 67px 61px 60px 59px 69px 59px 60px 60px 68px 93px 60px 76px;
}
.row.head { color: #b8b8b8; }
.arrow { color: #ff3232; font-weight: 400; margin-left: -2px; font-size: 13px; }
.hname { text-align: left; padding-left: 3px; }
.hdot { text-align: left; margin-left: -5px; color: #808080; }
.no { text-align: center; padding-left: 7px; }
.nm { text-align: left; padding-left: 14px; font-size: 16px; color: #f4f46c; overflow: visible; }
.tag { text-align: left; padding-top: 8px; padding-left: 1px; line-height: 14px; font-size: 12px; font-weight: 700; }
.subtabs { margin-top: auto; height: 17px; display: flex; flex: none; padding-left: 3px; }
.st { height: 17px; line-height: 17px; width: 60px; text-align: center; font-size: 14px; background: #929292; color: #202020; clip-path: polygon(6px 0, 100% 0, calc(100% - 5px) 100%, 0 100%); font-weight: 700; margin-right: -4px; white-space: nowrap; }
.st:nth-child(2) { width: 78px; font-weight: 400; }
.st.on { background: #b80000; color: #fff; }
.vscroll { width: 14px; flex: none; display: flex; flex-direction: column; padding-top: 1px; }
.vscroll .thumb { height: 38px; background: #303030; margin-top: 1px; width: 13px; }
.vscroll .sbtn.down { margin-top: auto; }

.bottombar { height: 18px; flex: none; display: flex; line-height: 17px; border-bottom: 0; padding-left: 3px; position: relative; }
.bottombar span { padding: 0 2px; border-right: 1px solid #c00000; }
.bottombar .cy { color: #54ffff; padding: 0 5px; }
.bottombar .rd { color: #ff3232; }
.bottombar .promo { margin-left: auto; border-left: 1px solid #c00000; border-right: 0; }

/* right panel */
.panel { width: 234px; flex: none; border-left: 1px solid #c00000; display: flex; flex-direction: column; }
.p-head { height: 29px; flex: none; border-bottom: 1px solid #c00000; padding-left: 36px; display: flex; align-items: center; gap: 7px; padding-top: 0; }
.p-code { color: #ffff00; font-weight: 700; font-size: 14px; letter-spacing: .4px; }
.p-name { color: #3ce8ff; font-size: 15px; letter-spacing: 1px; }
.p-block { flex: none; border-bottom: 1px solid #c00000; padding: 0 2px; }
.p-block.top { height: 98px; padding-top: 1px; }
.p-block.mid { height: 230px; padding-top: 1px; }
.p-block.type { height: 20px; }
.p-block.breadth { height: 22px; padding-top: 1px; }
.prow { height: 19px; display: flex; justify-content: space-between; align-items: center; font-size: 16px; line-height: 19px; white-space: nowrap; }
.prow b { font-size: 14px; font-weight: 700; letter-spacing: .15px; color: #bdbdbd; }
.prow .y { color: #c8c800; }
.prow .g { color: #00e600; }
.prow .r { color: #ff3232; }
.prow .w { color: #fff; }
.prow i { font-style: normal; font-weight: 400; font-size: 16px; }
.olive { color: #a8a800; font-style: normal; font-size: 14px; display: flex; align-items: center; gap: 2px; }
.breadth .prow { justify-content: flex-start; }
.breadth .b1 { margin-left: 18px; }
.breadth .s2 { margin-left: 4px; }
.breadth .b3 { margin-left: auto; }
.p-label { height: 21px; flex: none; border-bottom: 1px solid #c00000; padding-left: 1px; line-height: 20px; font-size: 12px; }
.bar-r { fill: none; stroke: #ff3232; stroke-width: 1; vector-effect: non-scaling-stroke; shape-rendering: crispEdges; }
.bar-g { fill: none; stroke: #00e600; stroke-width: 1; vector-effect: non-scaling-stroke; shape-rendering: crispEdges; }
.fill-r { fill: #ff3232; }
.bar-white { stroke: #fff; fill: none; stroke-width: 1; }
.line-w { fill: none; stroke: #fff; stroke-width: 1; vector-effect: non-scaling-stroke; }
.line-y { fill: none; stroke: #ffff00; stroke-width: 1; vector-effect: non-scaling-stroke; }
.day-labels text { font-size: 12px; dominant-baseline: central; }
.dr { fill: #ff3232; }
.dg { fill: #00e600; }
.dw { fill: #f0f0f0; }
.dy { fill: #c8c800; letter-spacing: .5px; }
.p-gap { height: 10px; flex: none; border-top: 1px solid #c00000; border-bottom: 1px solid #c00000; }
.p-tabs { flex: 1; display: flex; line-height: 17px; font-size: 13px; }
.p-tabs span { width: 29px; text-align: center; border-right: 1px solid #c00000; }
.p-tabs .on { color: #54ffff; }

/* overlays */
.watermark { position: absolute; left: 2409px; top: 13px; font: 900 35px/44px "Noto Sans CJK SC", sans-serif; letter-spacing: -1px; color: rgba(90,90,90,.62); }
.sub-blue { position: absolute; left: 948px; top: 1276px; font: 700 32px/38px "Noto Sans CJK SC", sans-serif; color: #0a7cc6; }
.sub-white { position: absolute; left: 1665px; top: 1332px; font: 700 32px/38px "Noto Sans CJK SC", sans-serif; color: #f4ffff; text-shadow: 1px 1px 0 #33b5c8, -1px 0 0 #33b5c8; }

.netmeter { position: absolute; left: 2388px; top: 1261px; width: 118px; height: 41px; padding: 0 0 0 9px; background: rgba(36,40,50,.88); border-radius: 20px; display: flex; flex-direction: column; justify-content: space-around; }
.netrow { display: flex; align-items: center; gap: 5px; width: 60px; font-size: 13px; line-height: 16px; }
.netrow b { color: #e4e4e4; font-weight: 400; }
.netrow i { color: #8e8e96; font-style: normal; margin-left: -3px; font-size: 12px; }
.arr-up { fill: #3f9fe0; }
.arr-dn { fill: #1f9a2c; }
.gauge { position: absolute; left: 58px; top: -9px; width: 60px; height: 60px; border-radius: 50%; background: #262a36; box-shadow: 0 0 2px #14161c; }
.gauge-arc { fill: none; stroke: #45cfc0; stroke-width: 1.6; }
.gauge-num { position: absolute; left: 13px; top: 14px; font-size: 26px; line-height: 30px; color: #e8e8ee; }
.gauge-num small { font-size: 11px; margin-left: 1px; }

.popup { position: absolute; left: 2383px; bottom: 0; width: 177px; height: 16px; }
.popup-logo { position: absolute; left: 0; bottom: 0; }
.logo-o { fill: #f06a28; }
.logo-w { fill: #fff; }
.popup-strip { position: absolute; left: 27px; right: 0; bottom: 0; height: 7px; background: #f4f6fa; }
```
